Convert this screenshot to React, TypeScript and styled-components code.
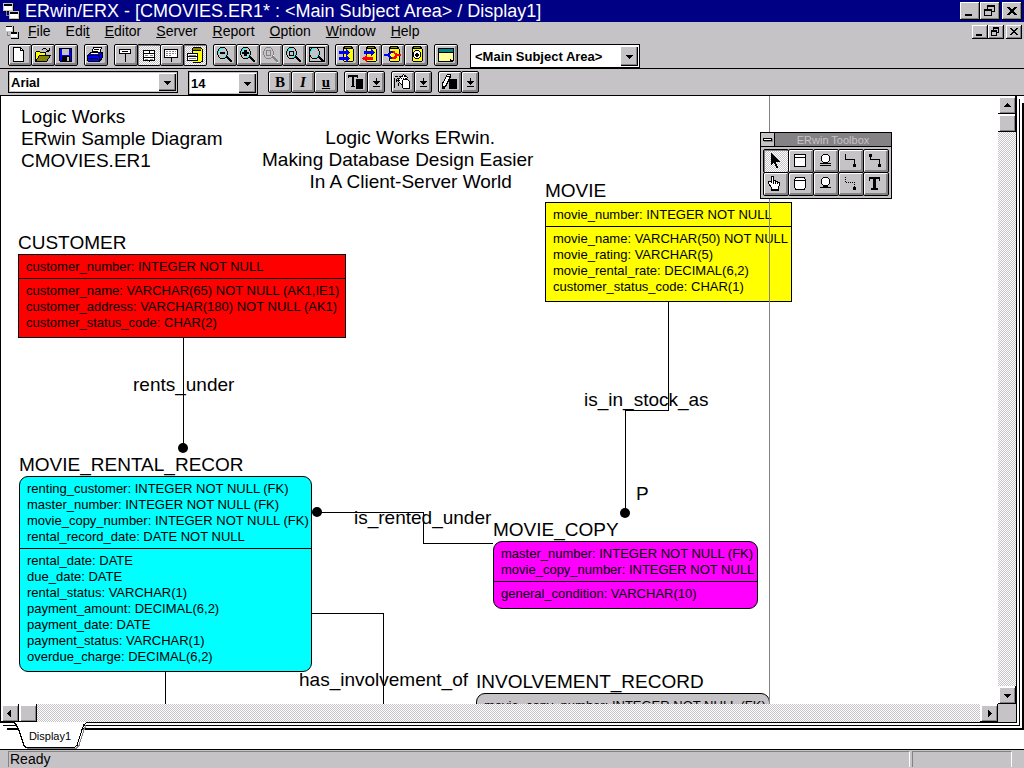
import React from "react";
import styled, { createGlobalStyle, css } from "styled-components";

const FACE = "#c6c3c6";
const SHADE = "#848284";
const NAVY = "#000084";
const SANS = '"Liberation Sans", Arial, sans-serif';
const SERIF = '"Liberation Serif", "Times New Roman", serif';

const dither = css`
  background: repeating-conic-gradient(${FACE} 0 25%, #fff 0 50%) 0 0 / 2px 2px;
`;

const GlobalStyle = createGlobalStyle`
  * { box-sizing: border-box; }
  body { margin: 0; background: #fff; color: #000; font-family: ${SANS}; }
  button, select { font-family: inherit; color: inherit; margin: 0; padding: 0; border-radius: 0; }
  svg { display: block; shape-rendering: crispEdges; }
`;

const Window = styled.div`
  display: flex;
  flex-direction: column;
  height: 100vh;
  overflow: hidden;
`;

/* ---------- title and menu ---------- */

const TitleBar = styled.header`
  display: flex;
  align-items: center;
  flex: none;
  height: 22px;
  padding: 0 2px 0 3px;
  background: ${NAVY};
  color: #fff;
`;

const Title = styled.h1`
  flex: 1;
  margin: 0;
  padding-left: 5px;
  font-size: 18px;
  line-height: 22px;
  font-weight: 400;
  white-space: nowrap;
  overflow: hidden;
`;

const MenuBar = styled.nav`
  display: flex;
  align-items: center;
  flex: none;
  height: 20px;
  padding: 0 2px 0 5px;
  background: ${FACE};
`;

const MenuList = styled.div`
  display: flex;
  flex: 1;
  padding-left: 2px;
`;

const MenuItem = styled.button`
  border: 0;
  padding: 0 8px 2px 7px;
  background: none;
  font-size: 14px;
  line-height: 18px;
`;

const CaptionButtons = styled.div`
  display: flex;
`;

const CaptionButton = styled.button<{ $small?: boolean; $apart?: boolean }>`
  width: ${(p) => (p.$small ? 16 : 20)}px;
  height: ${(p) => (p.$small ? 14 : 18)}px;
  margin-left: ${(p) => (p.$apart ? 2 : 0)}px;
  border: 0;
  background: ${FACE};
  box-shadow: inset -1px -1px #000, inset 1px 1px #fff, inset -2px -2px ${SHADE};
`;

/* ---------- tool bars ---------- */

const ToolBar = styled.div<{ $format?: boolean }>`
  display: flex;
  align-items: flex-start;
  flex: none;
  gap: ${(p) => (p.$format ? 10 : 6)}px;
  height: 27px;
  padding: 2px 8px 0;
  background: ${FACE};
  border-bottom: 1px solid #000;
`;

const ToolGroup = styled.div`
  display: flex;
`;

const SplitTools = styled.div`
  display: flex;
  gap: 6px;
`;

const ToolButton = styled.button<{ $on?: boolean; $narrow?: boolean }>`
  display: grid;
  place-items: center;
  width: ${(p) => (p.$narrow ? 18 : 24)}px;
  height: 22px;
  border: 1px solid #000;
  border-radius: 2px;
  background: ${FACE};
  box-shadow: inset 1px 1px #fff, inset -1px -1px ${SHADE}, inset -2px -2px ${SHADE};
  & + & {
    margin-left: -1px;
  }
  ${(p) =>
    p.$on &&
    css`
      ${dither}
      box-shadow: inset 1px 1px ${SHADE};
    `}
`;

const StyleGlyph = styled.span<{ $kind: "bold" | "italic" | "underline" }>`
  font-family: ${SERIF};
  font-size: 15px;
  line-height: 16px;
  font-weight: 700;
  font-style: ${(p) => (p.$kind === "italic" ? "italic" : "normal")};
  text-decoration: ${(p) => (p.$kind === "underline" ? "underline" : "none")};
`;

const Combo = styled.div<{ $width: number; $tall?: boolean; $flat?: boolean; $apart?: boolean }>`
  display: grid;
  grid-template-columns: 1fr 18px;
  align-items: stretch;
  width: ${(p) => p.$width}px;
  height: ${(p) => (p.$tall ? 24 : 22)}px;
  margin-left: ${(p) => (p.$apart ? 6 : 0)}px;
  padding: 1px;
  border: 1px solid #000;
  background: #fff;
  box-shadow: ${(p) => (p.$flat ? "none" : `inset 1px 1px ${FACE}, inset -1px -1px ${FACE}`)};
`;

const Picker = styled.select<{ $inset?: boolean }>`
  grid-area: 1 / 1 / 2 / 3;
  appearance: none;
  border: 0;
  padding: 0 20px 0 ${(p) => (p.$inset ? 3 : 1)}px;
  background: transparent;
  font-size: 13px;
  font-weight: 700;
  outline: none;
`;

const ComboArrow = styled.span`
  grid-area: 1 / 2;
  display: grid;
  place-items: center;
  pointer-events: none;
  background: ${FACE};
  box-shadow: inset 1px 1px #fff, inset -1px -1px #000, inset -2px -2px ${SHADE};
`;

/* ---------- workspace ---------- */

const Workspace = styled.main`
  flex: 1;
  min-height: 0;
  display: flex;
  flex-direction: column;
  background: #fff;
`;

const Sheet = styled.section`
  flex: 1;
  min-height: 0;
  display: grid;
  grid-template: minmax(0, 1fr) 18px / minmax(0, 1fr) 18px;
  margin-right: 7px;
  border: solid #000;
  border-width: 0 1px 1px;
  background: #fff;
  box-shadow: 2px 2px #fff, 3px 3px #000, 5px 5px #fff, 7px 7px #000;
`;

const Canvas = styled.div`
  position: relative;
  overflow: hidden;
`;

const Links = styled.svg`
  position: absolute;
  inset: 0;
  width: 100%;
  height: 100%;
`;

const PageEdge = styled.div`
  position: absolute;
  top: 0;
  bottom: 0;
  left: 768px;
  width: 1px;
  background: ${SHADE};
`;

const Placed = styled.div<{ $x: number; $y: number }>`
  position: absolute;
  left: ${(p) => p.$x}px;
  top: ${(p) => p.$y}px;
`;

const Note = styled(Placed)`
  font-size: 19px;
  line-height: 22px;
  white-space: pre;
`;

const EntityName = styled.h2`
  margin: 0;
  font-size: 19px;
  line-height: 22px;
  font-weight: 400;
  white-space: nowrap;
`;

const EntityBox = styled.div<{ $fill: string; $round?: boolean; $width: number }>`
  width: ${(p) => p.$width}px;
  border: 1px solid #000;
  border-radius: ${(p) => (p.$round ? 9 : 0)}px;
  background: ${(p) => p.$fill};
`;

const Attributes = styled.ul<{ $keys?: boolean }>`
  margin: 0;
  padding: 4px 7px ${(p) => (p.$keys ? 3 : 6)}px;
  border-bottom: ${(p) => (p.$keys ? "1px solid #000" : "0")};
  list-style: none;
  font-size: 13px;
  line-height: 16px;
  white-space: nowrap;
`;

const ScrollBar = styled.div<{ $vertical?: boolean }>`
  display: flex;
  flex-direction: ${(p) => (p.$vertical ? "column" : "row")};
  ${dither}
`;

const ScrollButton = styled.button<{ $end?: boolean }>`
  display: grid;
  place-items: center;
  flex: none;
  width: 18px;
  height: 18px;
  border: 0;
  background: ${FACE};
  box-shadow: inset -1px -1px #000, inset 2px 2px #fff, inset -2px -2px ${SHADE};
  margin: ${(p) => (p.$end ? "auto 0 0 auto" : "0")};
`;

const Corner = styled.div`
  background: ${FACE};
`;

const TabStrip = styled.div`
  display: flex;
  flex: none;
  height: 26px;
  padding-left: 12px;
`;

const Tab = styled.button`
  position: relative;
  top: -1px;
  display: grid;
  width: 76px;
  height: 27px;
  border: 0;
  background: none;
  font-size: 11px;
  & > * {
    grid-area: 1 / 1;
  }
  & > span {
    align-self: center;
    padding-top: 2px;
    line-height: 25px;
  }
`;

/* ---------- status ---------- */

const StatusBar = styled.footer`
  display: flex;
  flex: none;
  gap: 2px;
  height: 19px;
  padding: 1px 12px 1px 8px;
  border-top: 1px solid #000;
  background: ${FACE};
`;

const StatusPane = styled.div<{ $fixed?: boolean }>`
  flex: ${(p) => (p.$fixed ? "0 0 100px" : "1")};
  padding-left: 1px;
  border: solid ${SHADE};
  border-width: 1px 0 0 1px;
  border-right: 1px solid #fff;
  font-size: 14px;
  line-height: 15px;
`;

/* ---------- floating toolbox ---------- */

const ToolBox = styled(Placed)`
  border: 1px solid #000;
  background: ${FACE};
`;

const ToolBoxCaption = styled.div`
  display: flex;
  height: 14px;
  border-bottom: 1px solid #000;
  background: ${SHADE};
  color: ${FACE};
  font-size: 11px;
  line-height: 14px;
  text-align: center;
  & > span {
    flex: 1;
  }
`;

const SystemButton = styled.button`
  display: grid;
  place-items: center;
  width: 14px;
  border: 0;
  border-right: 1px solid #000;
  background: ${FACE};
`;

const ToolBoxGrid = styled.div`
  display: grid;
  grid-template-columns: repeat(5, 25px);
  grid-auto-rows: 23px;
  padding: 2px 3px 3px 2px;
`;

const BoxTool = styled.button<{ $on?: boolean }>`
  display: grid;
  place-items: center;
  width: 26px;
  height: 24px;
  border: 1px solid #000;
  border-radius: 2px;
  background: ${FACE};
  box-shadow: inset 1px 1px #fff, inset -2px -2px ${SHADE};
  ${(p) =>
    p.$on &&
    css`
      ${dither}
      box-shadow: inset 1px 1px ${SHADE};
    `}
`;

/* ---------- drawings ---------- */

const Art = ({ children, w = 22, h = 20 }: { children: React.ReactNode; w?: number; h?: number }) => (
  <svg width={w} height={h} viewBox={`1 1 ${w} ${h}`} fill="none" stroke="#000" aria-hidden="true">
    {children}
  </svg>
);

const ArrowHead = ({ dir }: { dir: "up" | "down" | "left" | "right" }) => {
  const d = {
    up: "M4 2h1v1h1v1h1v1h1v1H1V5h1V4h1V3h1z",
    down: "M1 3h7v1H7v1H6v1H5v1H4V6H3V5H2V4H1z",
    left: "M5 1v7H4V7H3V6H2V5H1V4h1V3h1V2h1V1z",
    right: "M3 1v7h1V7h1V6h1V5h1V4H6V3H5V2H4V1z",
  }[dir];
  return (
    <svg width="9" height="9" viewBox="0 0 9 9" aria-hidden="true">
      <path d={d} />
    </svg>
  );
};

const TwinWindows = ({ size }: { size: number }) => (
  <svg width={size} height={size} viewBox="0 0 17 17" aria-hidden="true">
    <path d="M1 1h10v8H1zM7 9h10v8H7z" fill="#000" />
    <path d="M3 8h1v5H3zM3 12h3v1H3z" fill={SHADE} />
    <path d="M0 0h10v8H0zM6 8h10v8H6z" fill={FACE} />
    <path d="M1 1h8v2H1zM7 9h8v2H7z" fill="#000" />
    <path d="M1 3h8v4H1zM7 11h8v4H7z" fill="#fff" />
  </svg>
);

const MinimizeArt = ({ small }: { small?: boolean }) =>
  small ? (
    <svg width="16" height="14" aria-hidden="true">
      <path d="M4 9h6v2H4z" />
    </svg>
  ) : (
    <svg width="20" height="18" aria-hidden="true">
      <path d="M5 12h7v2H5z" />
    </svg>
  );

const RestoreArt = ({ small }: { small?: boolean }) =>
  small ? (
    <svg width="16" height="14" fill="none" stroke="#000" aria-hidden="true">
      <path d="M5.500 5v-2.500h5v5h-2M5 3.500h6M3.500 6.500h5v4h-5zM3 5.500h6" />
    </svg>
  ) : (
    <svg width="20" height="18" fill="none" stroke="#000" aria-hidden="true">
      <path d="M7.500 7v-3.500h7v6h-3M7 4.500h8M4.500 8.500h7v5h-7zM4 7.500h8" />
    </svg>
  );

const CloseArt = ({ small }: { small?: boolean }) =>
  small ? (
    <svg width="16" height="14" aria-hidden="true">
      <path d="M4 3h2v1h1v1h2V4h1V3h2v1h-1v1h-1v1H9v1h1v1h1v1h1v1h-2V9H9V8H7v1H6v1H4V9h1V8h1V7h1V6H6V5H5V4H4z" />
    </svg>
  ) : (
    <svg width="20" height="18" aria-hidden="true">
      <path d="M5 5h3v1h1v1h2V6h1V5h3v1h-1v1h-1v1h-1v2h1v1h1v1h1v1h-3v-1h-1v-1H9v1H8v1H5v-1h1v-1h1v-1h1V8H7V7H6V6H5z" />
    </svg>
  );

const CaptionSet = ({ small, of }: { small?: boolean; of: string }) => (
  <CaptionButtons>
    <CaptionButton $small={small} aria-label={`Minimize ${of}`}>
      <MinimizeArt small={small} />
    </CaptionButton>
    <CaptionButton $small={small} aria-label={`Restore ${of}`}>
      <RestoreArt small={small} />
    </CaptionButton>
    <CaptionButton $small={small} $apart aria-label={`Close ${of}`}>
      <CloseArt small={small} />
    </CaptionButton>
  </CaptionButtons>
);

const Lens = ({ children, grey, framed }: { children?: React.ReactNode; grey?: boolean; framed?: boolean }) => {
  const ink = grey ? SHADE : "#000";
  return (
    <Art>
      {framed && <path d="M4.500 3.500h15v14h-15z" />}
      {grey && <path d="M8 4.500h4M8 14.500h4M14.500 7v5M15 14l4 5" stroke="#fff" />}
      <path
        d="M7 3h5v1h1v1h1v2h1v4h-1v2h-1v1h-1v1H7v-1H6v-1H5v-2H4V7h1V5h1V4h1z"
        fill={ink}
        stroke="none"
      />
      <path d="M7 4h5v1h1v2h1v4h-1v2h-1v1H7v-1H6v-2H5V7h1V5h1z" fill={FACE} stroke="none" />
      {!grey && (
        <path d="M7 4h3v1H7zM6 5h1v2H6zM5 7h1v2H5zM12 12h1v1h-1zM13 9h1v2h-1zM10 13h2v1h-2z" fill="#00ffff" stroke="none" />
      )}
      <path d="M13 12h2v1h1v1h1v1h1v1h1v2h-2v-1h-1v-1h-1v-1h-1v-1h-1z" fill={ink} stroke="none" />
      {children}
    </Art>
  );
};

const Can = ({ children }: { children?: React.ReactNode }) => (
  <Art>
    <path d="M9 2h8v1h1v2h1v12h-1v1H9v-1H8V3h1z" fill="#000" stroke="none" />
    <path d="M9 5h9v12H9z" fill="#ffff00" stroke="none" />
    <path d="M10 3h6v1h-6z" fill="#848200" stroke="none" />
    {children}
  </Art>
);

const NewArt = () => (
  <Art>
    <path d="M5.500 3.500h7l3 3v11h-10z" fill="#fff" />
    <path d="M12.500 3v3.500h3" />
  </Art>
);

const OpenArt = () => (
  <Art>
    <path d="M4.500 17.500v-9l1-1h3l1 1h5v3h-3z" fill="#ffff00" />
    <path d="M4.500 17.500l4-6h11l-4 6z" fill="#848200" />
    <path d="M11 5.500h1M12 4.500h3M15 5.500h1M16 6.500h3M18.500 4v3M15 7.500h3" />
  </Art>
);

const SaveArt = () => (
  <Art>
    <path d="M5.500 4.500h12v13h-11l-1-1z" fill="#0000ff" />
    <path d="M8 5h7v6H8z" fill={FACE} stroke="none" />
    <path d="M8 12h8v6H8z" fill="#000" stroke="none" />
    <path d="M13 13h2v4h-2z" fill={FACE} stroke="none" />
  </Art>
);

const PrintArt = () => (
  <Art>
    <path d="M7.500 9.500l2-6h8l-2 6z" fill="#fff" />
    <path d="M10 5.500h5M9 7.500h5" />
    <path d="M3.500 11.500l3-3h12v5l-3 4h-11l-1-1z" fill="#0000ff" />
    <path d="M4 11.500h11.500l3-3M15.500 12v5M5 14.500h9" />
    <path d="M7 9h7l-1 1H7z" fill="#fff" stroke="none" />
  </Art>
);

const EntityArt = () => (
  <Art>
    <path d="M5.500 5.500h11v4h-11z" fill="#fff" />
    <path d="M8 7.500h6M11.500 9v9" />
  </Art>
);

const AttributeArt = () => (
  <Art>
    <path d="M6.500 6.500h11v10h-11z" fill="#fff" />
    <path d="M6 9.500h12M6 13.500h12M12.500 6v3M12.500 16v2" />
    <path d="M8 11.500h3M13 11.500h3M8 15.500h3M13 15.500h3" stroke={SHADE} />
  </Art>
);

const DefinitionArt = () => (
  <Art>
    <path d="M4.500 5.500h13v8h-13z" fill="#fff" />
    <path d="M11.500 13v5" />
    <path d="M6 7.500h10M6 9.500h10M6 11.500h5" strokeDasharray="2 1" stroke={SHADE} />
  </Art>
);

const PhysicalArt = () => (
  <Art>
    <path d="M10 3h8v1h2v14h-2v1h-8v-1H9V4h1z" fill="#ffff00" stroke="none" />
    <path d="M10 3.500h8M10 6.500h8M18 4.500h1M19.500 5v13M10 18.500h8M18 17.500h1M9.500 4v5" />
    <path d="M10 4.500h8M10 5.500h8" stroke="#848200" />
    <path d="M4.500 9.500h10v7h-10z" fill="#fff" />
    <path d="M4 12.500h11" />
    <path d="M6 11.500h7M6 14.500h7" stroke={SHADE} />
  </Art>
);

const WindowArt = () => (
  <Art>
    <path d="M4.500 4.500h15v12h-3v1h-12z" fill="#ffff9c" />
    <path d="M5 5h14v3H5z" fill="#008284" stroke="none" />
    <path d="M5 8.500h14M9 17.500h10M16.500 15v2" />
  </Art>
);

const RightArrow = ({ x, y }: { x: number; y: number }) => (
  <path d={`M${x} ${y}h7v-2h1v1h1v1h1v1h1v1h-1v1h-1v1h-1v1h-1v-2h-7z`} fill="#0000ff" stroke="none" />
);

const DropBarArt = () => (
  <svg width="7" height="9" viewBox="0 0 7 9" aria-hidden="true">
    <path d="M3 0h1v3h3v1H6v1H5v1H4v1H3V6H2V5H1V4H0V3h3zM0 8h7v1H0z" />
  </svg>
);

const TextColorArt = () => (
  <Art>
    <path d="M4 4h10v3h-1V6h-3v9h1v1H7v-1h1V6H5v1H4z" fill="#000" stroke="none" />
    <path d="M12 8h7v10h-7z" fill="#000" stroke="none" />
  </Art>
);

const FillColorArt = () => (
  <Art>
    <path d="M6.500 9.500l6-6 4 3-5 8z" fill="#fff" />
    <path d="M3.500 17V6.500M4 5.500h3M6 7.500h2M7 9.500h2M8 5.500h2M5.500 8v3M7.500 12v3" />
    <path d="M11 5h1v1h-1zM13 5h1v1h-1zM10 7h1v1h-1zM12 7h1v1h-1zM14 7h1v1h-1z" fill="#000" stroke="none" />
    <path d="M12.500 8.500h4l2 2v7h-6l-1-1v-7z" fill="#fff" />
  </Art>
);

const LineColorArt = () => (
  <Art>
    <path d="M11 8h8v10h-8z" fill="#000" stroke="none" />
    <path d="M4.500 16.500v-4l5-9h3v2l-5 10z" fill="#fff" />
    <path d="M4 15h3v3H4z" fill="#000" stroke="none" />
    <path d="M9 5.500h4" />
  </Art>
);

const PointerArt = () => (
  <Art w={24} h={22}>
    <path d="M8 4h1v1h1v1h1v1h1v1h1v1h1v1h1v1h1v1h1v1h-4v2h1v2h1v2h-2v-2h-1v-2h-1v-1h-1v1h-1v1H8z" fill="#000" stroke="none" />
  </Art>
);

const HandArt = () => (
  <Art w={24} h={22}>
    <path d="M8.500 17.500v-2l-3-4v-2h2l1 1V4.500h2v4h2v1h2v1h2v1l-1 6z" fill="#fff" />
    <path d="M10.500 8v4M12.500 9v3M14.500 10v2M8 18.500h8" />
  </Art>
);

const TableArt = ({ round }: { round?: boolean }) => (
  <Art w={24} h={22}>
    <path d={round ? "M8 5.500h8l1.500 2v8l-1.500 2H8l-1.500-2v-8z" : "M6.500 5.500h11v12h-11z"} fill="#fff" />
    <path d="M6 8.500h12" />
  </Art>
);

const SubtypeArt = ({ complete }: { complete?: boolean }) => (
  <Art w={24} h={22}>
    <path d="M10 5h5v1h1v1h1v5h-1v1h-1v1h-5v-1H9v-1H8V7h1V6h1z" fill="#000" stroke="none" />
    <path d="M10 6h5v1h1v5h-1v1h-5v-1H9V7h1z" fill="#fff" stroke="none" />
    <path d={complete ? "M7 14.500h11M7 16.500h11" : "M7 15.500h11M10 14.500h5"} />
  </Art>
);

const LinkArt = ({ dashed, many }: { dashed?: boolean; many?: boolean }) => (
  <Art w={24} h={22}>
    <path d="M7.500 5v5.500h9V17" strokeDasharray={dashed ? "1 1" : undefined} />
    <path d="M15 15h3v3h-3z" fill="#000" stroke="none" />
    {many && <path d="M6 5h3v3H6z" fill="#000" stroke="none" />}
  </Art>
);

const TextBlockArt = () => (
  <Art w={24} h={22}>
    <path d="M6 5h11v4h-1V7h-3v9h2v2H8v-2h2V7H7v2H6z" fill="#000" stroke="none" />
  </Art>
);

/* ---------- data ---------- */

const menus: [string, string, string][] = [
  ["", "F", "ile"],
  ["Edi", "t", ""],
  ["", "E", "ditor"],
  ["", "S", "erver"],
  ["", "R", "eport"],
  ["", "O", "ption"],
  ["", "W", "indow"],
  ["", "H", "elp"],
];

type Tool = { name: string; art: React.ReactNode; on?: boolean };

const toolGroups: Tool[][] = [
  [
    { name: "New", art: <NewArt /> },
    { name: "Open", art: <OpenArt /> },
    { name: "Save", art: <SaveArt /> },
  ],
  [{ name: "Print", art: <PrintArt /> }],
  [
    { name: "Entity level", art: <EntityArt /> },
    { name: "Attribute level", art: <AttributeArt />, on: true },
    { name: "Definition level", art: <DefinitionArt /> },
    { name: "Physical schema level", art: <PhysicalArt />, on: true },
  ],
  [
    { name: "Zoom out", art: <Lens><path d="M7 8h5v2H7z" fill="#000" stroke="none" /></Lens> },
    { name: "Zoom in", art: <Lens><path d="M6 8h7v2H6zM8 6h3v6H8z" fill="#000" stroke="none" /></Lens> },
    { name: "Previous zoom", art: <Lens grey><path d="M7.500 6.500h4v5h-4z" stroke={SHADE} /></Lens> },
    { name: "Zoom selected", art: <Lens><path d="M7.500 7.500h4v4h-4z" /></Lens> },
    { name: "Zoom to fit", art: <Lens framed /> },
  ],
  [
    {
      name: "Forward engineer",
      art: <Can><RightArrow x={4} y={7} /><RightArrow x={4} y={13} /></Can>,
    },
    {
      name: "Reverse engineer",
      art: (
        <Can>
          <RightArrow x={6} y={7} />
          <path d="M15 13v3H9v2H8v-1H7v-1H5v-1H4v-1h1v-1h2v-1h1v-1h1v2z" fill="#ff0000" stroke="none" />
        </Can>
      ),
    },
    {
      name: "Synchronize",
      art: (
        <Can>
          <path d="M3 10h4V9h2V7h5v2h-4v1H9v2h1v1h2v2H9v-1H8v-1H7v-1H3z" fill="#0000ff" stroke="none" />
          <path d="M20 10h-4V9h-2V7h-2v2h1v1h1v2h-1v1h-2v2h4v-1h1v-2h4z" fill="#ff0000" stroke="none" />
        </Can>
      ),
    },
    {
      name: "Browse database",
      art: (
        <Can>
          <path d="M11 6h4v1h1v1h1v5h-1v1h-1v1h-4v-1h-1v-1H9V8h1V7h1z" fill="#000" stroke="none" />
          <path d="M11 7h4v1h1v5h-1v1h-4v-1h-1V8h1z" fill="#fff" stroke="none" />
          <path d="M12 9h2v1h1v2h-1v1h-2v-1h-1v-2h1z" fill="#000" stroke="none" />
        </Can>
      ),
    },
  ],
  [{ name: "Report browser", art: <WindowArt /> }],
];

const colorTools: Tool[] = [
  { name: "Text color", art: <TextColorArt /> },
  { name: "Fill color", art: <FillColorArt /> },
  { name: "Line color", art: <LineColorArt /> },
];

const boxTools: Tool[] = [
  { name: "Select", art: <PointerArt />, on: true },
  { name: "Independent entity", art: <TableArt /> },
  { name: "Complete subtype", art: <SubtypeArt complete /> },
  { name: "Identifying relationship", art: <LinkArt /> },
  { name: "Many-to-many relationship", art: <LinkArt many /> },
  { name: "Move attribute", art: <HandArt /> },
  { name: "Dependent entity", art: <TableArt round /> },
  { name: "Incomplete subtype", art: <SubtypeArt /> },
  { name: "Non-identifying relationship", art: <LinkArt dashed /> },
  { name: "Text block", art: <TextBlockArt /> },
];

const entities = [
  {
    name: "CUSTOMER", x: 17, y: 136, width: 328, fill: "#ff0000", round: false,
    keys: ["customer_number: INTEGER NOT NULL"],
    rest: [
      "customer_name: VARCHAR(65) NOT NULL (AK1,IE1)",
      "customer_address: VARCHAR(180) NOT NULL (AK1)",
      "customer_status_code: CHAR(2)",
    ],
  },
  {
    name: "MOVIE", x: 544, y: 84, width: 247, fill: "#ffff00", round: false,
    keys: ["movie_number: INTEGER NOT NULL"],
    rest: [
      "movie_name: VARCHAR(50) NOT NULL",
      "movie_rating: VARCHAR(5)",
      "movie_rental_rate: DECIMAL(6,2)",
      "customer_status_code: CHAR(1)",
    ],
  },
  {
    name: "MOVIE_RENTAL_RECOR", x: 18, y: 358, width: 293, fill: "#00ffff", round: true,
    keys: [
      "renting_customer: INTEGER NOT NULL (FK)",
      "master_number: INTEGER NOT NULL (FK)",
      "movie_copy_number: INTEGER NOT NULL (FK)",
      "rental_record_date: DATE NOT NULL",
    ],
    rest: [
      "rental_date: DATE",
      "due_date: DATE",
      "rental_status: VARCHAR(1)",
      "payment_amount: DECIMAL(6,2)",
      "payment_date: DATE",
      "payment_status: VARCHAR(1)",
      "overdue_charge: DECIMAL(6,2)",
    ],
  },
  {
    name: "MOVIE_COPY", x: 492, y: 423, width: 265, fill: "#ff00ff", round: true,
    keys: ["master_number: INTEGER NOT NULL (FK)", "movie_copy_number: INTEGER NOT NULL"],
    rest: ["general_condition: VARCHAR(10)"],
  },
  {
    name: "INVOLVEMENT_RECORD", x: 475, y: 575, width: 294, fill: FACE, round: true,
    keys: ["movie_copy_number: INTEGER NOT NULL (FK)"],
    rest: [],
  },
];

const notes = [
  { x: 20, y: 10, text: "Logic Works\nERwin Sample Diagram\nCMOVIES.ER1" },
  { x: 261, y: 31, text: "            Logic Works ERwin.\nMaking Database Design Easier\n         In A Client-Server World" },
  { x: 132, y: 278, text: "rents_under" },
  { x: 583, y: 293, text: "is_in_stock_as" },
  { x: 635, y: 387, text: "P" },
  { x: 353, y: 411, text: "is_rented_under" },
  { x: 298, y: 573, text: "has_involvement_of" },
];

export default function App() {
  return (
    <>
      <GlobalStyle />
      <Window>
        <TitleBar>
          <TwinWindows size={17} />
          <Title>ERwin/ERX - [CMOVIES.ER1* : &lt;Main Subject Area&gt; / Display1]</Title>
          <CaptionSet of="application" />
        </TitleBar>

        <MenuBar>
          <TwinWindows size={14} />
          <MenuList>
            {menus.map(([before, key, after]) => (
              <MenuItem key={before + key + after}>
                {before}
                <u>{key}</u>
                {after}
              </MenuItem>
            ))}
          </MenuList>
          <CaptionSet small of="document" />
        </MenuBar>

        <ToolBar>
          {toolGroups.map((group) => (
            <ToolGroup key={group[0].name}>
              {group.map((t) => (
                <ToolButton key={t.name} $on={t.on} aria-label={t.name}>
                  {t.art}
                </ToolButton>
              ))}
            </ToolGroup>
          ))}
          <Combo $width={170} $tall $flat $apart>
            <Picker $inset aria-label="Subject area">
              <option>&lt;Main Subject Area&gt;</option>
            </Picker>
            <ComboArrow>
              <ArrowHead dir="down" />
            </ComboArrow>
          </Combo>
        </ToolBar>

        <ToolBar $format>
          <Combo $width={170}>
            <Picker aria-label="Font">
              <option>Arial</option>
            </Picker>
            <ComboArrow>
              <ArrowHead dir="down" />
            </ComboArrow>
          </Combo>
          <Combo $width={70} $tall>
            <Picker aria-label="Font size">
              <option>14</option>
            </Picker>
            <ComboArrow>
              <ArrowHead dir="down" />
            </ComboArrow>
          </Combo>
          <SplitTools>
            <ToolGroup>
              <ToolButton aria-label="Bold">
                <StyleGlyph $kind="bold">B</StyleGlyph>
              </ToolButton>
              <ToolButton aria-label="Italic">
                <StyleGlyph $kind="italic">I</StyleGlyph>
              </ToolButton>
              <ToolButton aria-label="Underline">
                <StyleGlyph $kind="underline">u</StyleGlyph>
              </ToolButton>
            </ToolGroup>
            {colorTools.map((t) => (
              <ToolGroup key={t.name}>
                <ToolButton aria-label={t.name}>{t.art}</ToolButton>
                <ToolButton $narrow aria-label={`${t.name} choices`}>
                  <DropBarArt />
                </ToolButton>
              </ToolGroup>
            ))}
          </SplitTools>
        </ToolBar>

        <Workspace>
          <Sheet>
            <Canvas>
              <Links aria-hidden="true" fill="none" stroke="#000">
                <path d="M182.500 242v110M667.500 206v108.500h-43V417M311 416.500h111.500v31H492M311 517.500h71.500V700M164.500 576v124" />
                <g fill="#000" stroke="none" shapeRendering="auto">
                  <circle cx="182" cy="352" r="5" />
                  <circle cx="624" cy="417" r="5" />
                  <circle cx="316" cy="416" r="5" />
                </g>
              </Links>
              {entities.map((e) => (
                <Placed key={e.name} $x={e.x} $y={e.y}>
                  <EntityName>{e.name}</EntityName>
                  <EntityBox $fill={e.fill} $round={e.round} $width={e.width}>
                    <Attributes $keys>
                      {e.keys.map((a) => (
                        <li key={a}>{a}</li>
                      ))}
                    </Attributes>
                    <Attributes>
                      {e.rest.map((a) => (
                        <li key={a}>{a}</li>
                      ))}
                    </Attributes>
                  </EntityBox>
                </Placed>
              ))}
              {notes.map((n) => (
                <Note key={n.text} $x={n.x} $y={n.y}>
                  {n.text}
                </Note>
              ))}
              <PageEdge />
              <ToolBox $x={759} $y={36}>
                <ToolBoxCaption>
                  <SystemButton aria-label="Toolbox menu">
                    <svg width="10" height="4" aria-hidden="true">
                      <path d="M1 1h9v3H1z" fill={SHADE} />
                      <path d="M0 0h9v3H0z" />
                      <path d="M1 1h7v1H1z" fill="#fff" />
                    </svg>
                  </SystemButton>
                  <span>ERwin Toolbox</span>
                </ToolBoxCaption>
                <ToolBoxGrid>
                  {boxTools.map((t) => (
                    <BoxTool key={t.name} $on={t.on} aria-label={t.name}>
                      {t.art}
                    </BoxTool>
                  ))}
                </ToolBoxGrid>
              </ToolBox>
            </Canvas>
            <ScrollBar $vertical>
              <ScrollButton aria-label="Scroll up">
                <ArrowHead dir="up" />
              </ScrollButton>
              <ScrollButton aria-label="Vertical position" />
              <ScrollButton $end aria-label="Scroll down">
                <ArrowHead dir="down" />
              </ScrollButton>
            </ScrollBar>
            <ScrollBar>
              <ScrollButton aria-label="Scroll left">
                <ArrowHead dir="left" />
              </ScrollButton>
              <ScrollButton aria-label="Horizontal position" />
              <ScrollButton $end aria-label="Scroll right">
                <ArrowHead dir="right" />
              </ScrollButton>
            </ScrollBar>
            <Corner />
          </Sheet>
          <TabStrip>
            <Tab>
              <svg width="76" height="27" viewBox="0 0 76 27" aria-hidden="true">
                <path d="M0 0h76l-4 3-6 20-3 3H15l-3-3L6 6 4 2z" fill="#fff" />
                <path d="M15 26.500h49l3-3 5-16 2-4" fill="none" stroke={SHADE} />
                <path d="M0 .5h2l2 2 3 6 5 15 2 2h48l3-2 5-16 2-5 3-2" fill="none" stroke="#000" />
              </svg>
              <span>Display1</span>
            </Tab>
          </TabStrip>
        </Workspace>

        <StatusBar>
          <StatusPane>Ready</StatusPane>
          <StatusPane $fixed />
        </StatusBar>
      </Window>
    </>
  );
}
